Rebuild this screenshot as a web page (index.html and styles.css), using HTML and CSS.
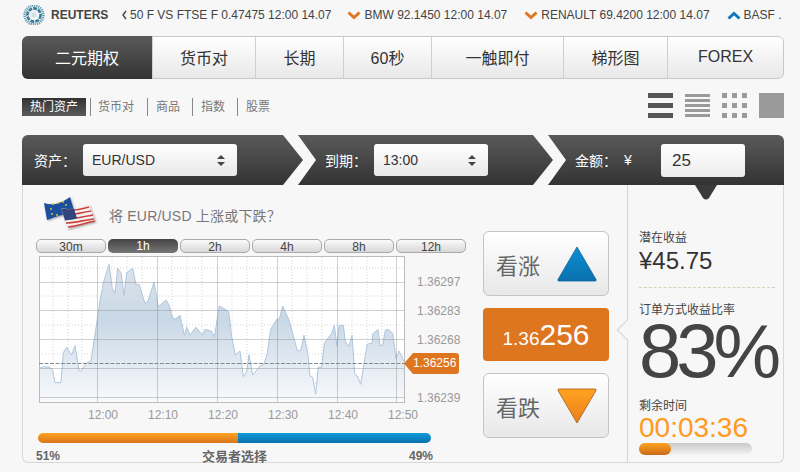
FILE: index.html
```html
<!DOCTYPE html>
<html lang="zh-CN">
<head>
  <meta charset="UTF-8" />
  <meta name="viewport" content="width=device-width, initial-scale=1" />
  <title>二元期权</title>
  <link rel="stylesheet" href="styles.css">
</head>
<body>
  <div class="page">
    <div class="ticker">
      <svg class="logo" width="22" height="22" viewBox="0 0 22 22">
        <circle cx="11" cy="11" r="9.4" fill="none" stroke="#6fa2b8" stroke-width="2.6" stroke-dasharray="1.3 .8"/>
        <circle cx="11" cy="11" r="6.6" fill="none" stroke="#3b7c9c" stroke-width="2.6" stroke-dasharray="4 1"/>
        <path d="M7 13c-1-4 3-7 7-5" fill="none" stroke="#e4edf1" stroke-width="1.6"/>
        <circle cx="11" cy="11" r="2.6" fill="#cfdfe6"/>
      </svg>
      <span class="brand">REUTERS</span>
      <div class="quotes">
        <span class="quote first"><svg class="chev" width="6" height="10" viewBox="0 0 6 10"><path d="M5 1 2 5l3 4" fill="none" stroke="#444" stroke-width="1.4"/></svg>50 F VS FTSE F 0.47475 12:00 14.07</span>
        <span class="quote"><svg class="chev" width="14" height="9" viewBox="0 0 14 9"><path d="M1.500 1.500 7 6.500l5.500-5" fill="none" stroke="#de751f" stroke-width="3"/></svg>BMW 92.1450 12:00 14.07</span>
        <span class="quote"><svg class="chev" width="14" height="9" viewBox="0 0 14 9"><path d="M1.500 1.500 7 6.500l5.500-5" fill="none" stroke="#de751f" stroke-width="3"/></svg>RENAULT 69.4200 12:00 14.07</span>
        <span class="quote"><svg class="chev" width="14" height="9" viewBox="0 0 14 9"><path d="M1.500 7.500 7 2.500l5.500 5" fill="none" stroke="#0f78b8" stroke-width="3"/></svg>BASF .</span>
      </div>
    </div>

    <nav class="tabs">
      <a class="tab active">二元期权</a>
      <a class="tab">货币对</a>
      <a class="tab">长期</a>
      <a class="tab">60秒</a>
      <a class="tab">一触即付</a>
      <a class="tab">梯形图</a>
      <a class="tab">FOREX</a>
    </nav>

    <div class="subbar">
      <div class="cats">
        <a class="cat active">热门资产</a>
        <a class="cat first">货币对</a>
        <a class="cat">商品</a>
        <a class="cat">指数</a>
        <a class="cat">股票</a>
      </div>
      <div class="views">
        <div class="view view-3"><i></i><i></i><i></i></div>
        <div class="view view-5"><i></i><i></i><i></i><i></i><i></i></div>
        <div class="view view-grid"><i></i><i></i><i></i><i></i><i></i><i></i><i></i><i></i><i></i></div>
        <div class="view view-one"></div>
      </div>
    </div>

    <div class="panel">
      <div class="head">
        <div class="step step-asset">
          <span class="step-label">资产：</span>
          <div class="picker picker-asset">EUR/USD
            <svg width="8" height="11" viewBox="0 0 8 11"><path d="M4 0 8 4H0zM4 11 0 7h8z" fill="#444"/></svg>
          </div>
        </div>
        <div class="step step-expiry">
          <span class="step-label">到期：</span>
          <div class="picker picker-expiry">13:00
            <svg width="8" height="11" viewBox="0 0 8 11"><path d="M4 0 8 4H0zM4 11 0 7h8z" fill="#444"/></svg>
          </div>
        </div>
        <div class="step">
          <span class="step-label">金额：</span>
          <span class="yen">¥</span>
          <div class="amount">25</div>
        </div>
        <svg class="arrow arrow-one" width="33" height="50" viewBox="0 0 33 50"><path d="M0 0h15l18 25-18 25H0l20-25z" fill="#f7f7f7"/></svg>
        <svg class="arrow arrow-two" width="33" height="50" viewBox="0 0 33 50"><path d="M0 0h15l18 25-18 25H0l20-25z" fill="#f7f7f7"/></svg>
      </div>

      <div class="body">
        <div class="main">
          <div class="question">
            <svg class="flag" width="54" height="34" viewBox="0 0 54 34">
              <path d="M2 7c8 3 16 1 26-6l5 17c-10-1-19 3-28 6z" fill="#1c4f9c"/>
              <g fill="#e8c93a"><circle cx="11" cy="8" r=".9"/><circle cx="16" cy="7" r=".9"/><circle cx="21" cy="6" r=".9"/><circle cx="9" cy="13" r=".9"/><circle cx="10" cy="18" r=".9"/><circle cx="15" cy="19" r=".9"/><circle cx="24" cy="9" r=".9"/></g>
              <path d="M19 12c11 3 19-1 28-3l6 16C43 27 35 30 26 33c-2-5-4-11-7-21z" fill="#f6f2f0"/>
              <g fill="none" stroke="#cc4040" stroke-width="1.700">
                <path d="M32 14c6 0 10-2 15-3"/>
                <path d="M33 18c6-1 10-2 16-3"/>
                <path d="M34 22c6-1 11-2 17-3"/>
                <path d="M24 27c10 0 18-3 28-4"/>
                <path d="M26 31c9-1 17-4 27-6"/>
              </g>
              <path d="M19 12c5 1.500 9 1.500 13 .5l3 10c-4 1-7 1.500-12 2z" fill="#34457e"/>
            </svg>
            <span class="ask">将 EUR/USD 上涨或下跌？</span>
          </div>

          <div class="trade">
            <div class="chart-col">
              <div class="ranges">
                <a class="range">30m</a>
                <a class="range active">1h</a>
                <a class="range">2h</a>
                <a class="range">4h</a>
                <a class="range">8h</a>
                <a class="range">12h</a>
              </div>
              <div class="chart-wrap">
                <svg class="chart" width="430" height="170" viewBox="36 254 430 170">
                  <defs>
                    <linearGradient id="area" x1="0" y1="0" x2="0" y2="1">
                      <stop offset="0" stop-color="#dde4eb"/>
                      <stop offset="0.4" stop-color="#c9d8e6"/>
                      <stop offset="1" stop-color="#f8fafc"/>
                    </linearGradient>
                  </defs>
                  <rect x="39.500" y="256.500" width="365" height="146" fill="#fff"/>
                  <path d="M39 268h366M39 296h366M39 325h366M39 354h366M39 383h366M53 257v145M68 257v145M82 257v145M112 257v145M127 257v145M142 257v145M172 257v145M187 257v145M202 257v145M232 257v145M247 257v145M262 257v145M292 257v145M307 257v145M322 257v145M352 257v145M367 257v145M382 257v145" stroke="#d6d6d6" stroke-dasharray="1 2" fill="none"/>
                  <path d="M39.3 368.3 43.3 366.7 50 367.3 52.7 370.7 55 382.7 61 382.7 63.3 352.7 66.7 347.3 71.7 355 75 345.7 79 370.7 80.7 371.3 86.7 362.7 91 361 96.7 323.3 99.3 305 103.3 283.3 109 264.3 112.3 288.3 115 293.3 117.7 268.3 121 272.7 124 295.7 126.7 272.7 132.7 268.3 136 285 139 284.3 145 303.3 147.7 301.7 154 282.3 158.3 306.7 166 300 169 305 172.7 317.7 175.3 319 180 315.3 184.3 335.3 186.7 327.3 190 335 196 327.3 202.3 335 205 329.3 211.7 331.3 214.3 337.3 219.3 306 223.3 308.3 228.7 311.7 231.7 336.7 235.3 355 240 351 243.3 376.7 246.7 371.7 249 355 252.7 375 260 366 264 364 267.3 353.3 270.7 329.3 276.7 319.3 279.3 319 282.7 306 289 320 297.3 350.7 300.7 350.7 304 335.3 307.7 353.3 310 376 312.7 377.3 315.7 394.3 318.3 367.3 321.7 367.3 324.3 343.3 331.7 333.3 334.3 325.3 337 346.7 339 325.3 343.3 325.3 345.3 341.7 349 346.7 352 335.3 354.7 374 357.3 376 360.7 384.3 367.3 344 372 343.3 372.7 334 378 329.3 380 346 382.7 345.3 385.3 330 388.3 329.3 392.7 333.3 396 358.7 399 351 403.3 360 404.3 361.7V402H39.3z" fill="url(#area)"/>
                  <path d="M39.3 368.3 43.3 366.7 50 367.3 52.7 370.7 55 382.7 61 382.7 63.3 352.7 66.7 347.3 71.7 355 75 345.7 79 370.7 80.7 371.3 86.7 362.7 91 361 96.7 323.3 99.3 305 103.3 283.3 109 264.3 112.3 288.3 115 293.3 117.7 268.3 121 272.7 124 295.7 126.7 272.7 132.7 268.3 136 285 139 284.3 145 303.3 147.7 301.7 154 282.3 158.3 306.7 166 300 169 305 172.7 317.7 175.3 319 180 315.3 184.3 335.3 186.7 327.3 190 335 196 327.3 202.3 335 205 329.3 211.7 331.3 214.3 337.3 219.3 306 223.3 308.3 228.7 311.7 231.7 336.7 235.3 355 240 351 243.3 376.7 246.7 371.7 249 355 252.7 375 260 366 264 364 267.3 353.3 270.7 329.3 276.7 319.3 279.3 319 282.7 306 289 320 297.3 350.7 300.7 350.7 304 335.3 307.7 353.3 310 376 312.7 377.3 315.7 394.3 318.3 367.3 321.7 367.3 324.3 343.3 331.7 333.3 334.3 325.3 337 346.7 339 325.3 343.3 325.3 345.3 341.7 349 346.7 352 335.3 354.7 374 357.3 376 360.7 384.3 367.3 344 372 343.3 372.7 334 378 329.3 380 346 382.7 345.3 385.3 330 388.3 329.3 392.7 333.3 396 358.7 399 351 403.3 360 404.3 361.7" fill="none" stroke="#aec6dc" stroke-width="1"/>
                  <path d="M39 282.500h366M39 310.500h366M39 339.500h366M39 368.500h366M39 397.500h366M97.500 257v145M157.500 257v145M217.500 257v145M277.500 257v145M337.500 257v145M396.500 257v145" stroke="#777" stroke-opacity=".35" fill="none"/>
                  <rect x="39.500" y="256.500" width="365" height="146" fill="none" stroke="#bbb"/>
                  <path d="M39 363.500h366" stroke="#888" stroke-dasharray="4 1.500" fill="none"/>
                  <g class="axis">
                    <text x="417" y="286">1.36297</text>
                    <text x="417" y="315">1.36283</text>
                    <text x="417" y="344">1.36268</text>
                    <text x="417" y="402">1.36239</text>
                    <text x="88" y="419">12:00</text>
                    <text x="148" y="419">12:10</text>
                    <text x="208" y="419">12:20</text>
                    <text x="268" y="419">12:30</text>
                    <text x="328" y="419">12:40</text>
                    <text x="388" y="419">12:50</text>
                  </g>
                </svg>
                <div class="tag">1.36256</div>
              </div>
              <div class="mood"><i class="mood-up"></i><i class="mood-down"></i></div>
              <div class="mood-labels"><span>51%</span><span>交易者选择</span><span>49%</span></div>
            </div>

            <div class="buy-col">
              <a class="buy">看涨
                <svg width="40" height="36" viewBox="0 0 40 36">
                  <defs><linearGradient id="blue" x1="0" y1="0" x2="0" y2="1"><stop offset="0" stop-color="#0d8fd2"/><stop offset="1" stop-color="#0a70ae"/></linearGradient></defs>
                  <path d="M20 1 39 33.500q.5 1.500-1 1.500H2q-1.500 0-1-1.500z" fill="url(#blue)" stroke="#0b6298" stroke-width=".8"/>
                </svg>
              </a>
              <div class="price"><span class="price-small">1.36</span>256</div>
              <a class="buy">看跌
                <svg width="40" height="36" viewBox="0 0 40 36">
                  <defs><linearGradient id="amber" x1="0" y1="0" x2="0" y2="1"><stop offset="0" stop-color="#ffa321"/><stop offset="1" stop-color="#ea7f1c"/></linearGradient></defs>
                  <path d="M20 35 1 2.500Q.5 1 2 1h36q1.500 0 1 1.500z" fill="url(#amber)" stroke="#9c5a1c" stroke-width=".8"/>
                </svg>
              </a>
            </div>
          </div>
        </div>

        <aside class="side">
          <svg class="notch" width="22" height="15" viewBox="0 0 22 15"><path d="M0 0h22l-8 13q-3 3-6 0z" fill="#3a3a3a"/></svg>
          <span class="pointer"></span>
          <div class="side-label">潜在收益</div>
          <div class="payout">¥45.75</div>
          <div class="side-label rate-label">订单方式收益比率</div>
          <div class="rate">83%</div>
          <div class="side-label left-label">剩余时间</div>
          <div class="clock">00:03:36</div>
          <div class="progress"><div class="progress-fill"></div></div>
        </aside>
      </div>
    </div>
  </div>
</body>
</html>
```

FILE: styles.css
```css
* {
  box-sizing: border-box;
}

html, body {
  height: 472px;
  overflow: hidden;
}

body {
  margin: 0;
  background-color: #f7f7f7;
  font-family: "Liberation Sans", "Noto Sans CJK SC", sans-serif;
  color: #333;
}

.page {
  width: 762px;
  margin-left: 22px;
  padding-top: 5px;
}

/* ticker */
.ticker {
  display: flex;
  align-items: center;
  height: 20px;
  width: 778px;
  overflow: hidden;
}

.logo {
  flex: none;
  margin-left: 1px;
}

.brand {
  flex: none;
  margin-left: 6px;
  width: 69px;
  font-size: 12px;
  font-weight: bold;
  color: #444;
}

.quotes {
  display: flex;
  gap: 17px;
  font-size: 12px;
  color: #444;
  white-space: nowrap;
}

.quote {
  display: flex;
  align-items: center;
  gap: 3px;
}

.quote.first {
  padding-left: 1px;
  margin-right: -1px;
}

/* main tabs */
.tabs {
  display: grid;
  grid-template-columns: 129px 103px 88px 88px 132px 104px 1fr;
  height: 43px;
  margin-top: 11px;
  border: 1px solid #c8c8c8;
  border-radius: 6px;
  background: linear-gradient(#ffffff, #e8e8e8);
}

.tab {
  display: flex;
  align-items: center;
  justify-content: center;
  padding-bottom: 2px;
  font-size: 16px;
  color: #333;
  border-left: 1px solid #cfcfcf;
}

.tab.active {
  margin: -1px 0 -1px -1px;
  border: none;
  border-radius: 6px 0 0 6px;
  background: linear-gradient(#5a5a5a, #333333);
  color: #fff;
}

/* sub bar */
.subbar {
  display: flex;
  justify-content: space-between;
  height: 25px;
  margin-top: 14px;
}

.cats {
  display: flex;
  align-items: center;
  height: 18px;
  margin-top: 5px;
}

.cat {
  padding: 0 12px 0 8px;
  height: 18px;
  line-height: 18px;
  font-size: 12px;
  color: #777;
  border-left: 1px solid #888;
}

.cat.active {
  width: 64px;
  padding: 0;
  margin-right: 4px;
  border: none;
  text-align: center;
  color: #fff;
  background: linear-gradient(#333333, #5a5a5a);
}

.cat.first {
  padding: 0 13px 0 7px;
}

.views {
  display: flex;
  gap: 12px;
}

.view {
  width: 25px;
  height: 25px;
}

.view i {
  display: block;
  background-color: #9a9a9a;
}

.view-3 {
  display: flex;
  flex-direction: column;
  justify-content: space-between;
}

.view-3 i {
  height: 5px;
  background-color: #555;
}

.view-5 {
  display: flex;
  flex-direction: column;
  justify-content: space-between;
  padding: 1px 0;
}

.view-5 i {
  height: 3px;
}

.view-grid {
  display: grid;
  grid-template-columns: repeat(3, 5px);
  grid-template-rows: repeat(3, 5px);
  justify-content: space-between;
  align-content: space-between;
}

.view-one {
  background-color: #9a9a9a;
}

/* trading panel */
.panel {
  height: 328px;
  margin-top: 17px;
  border: 1px solid #d8d8d8;
  border-top: none;
  border-radius: 6px;
}

.head {
  position: relative;
  display: flex;
  height: 50px;
  margin: 0 -1px;
  border-radius: 6px 6px 0 0;
  background: linear-gradient(#5a5a5a, #333333);
  color: #fff;
  font-size: 14px;
}

.step {
  display: flex;
  align-items: center;
  padding-left: 11px;
}

.step-asset {
  width: 292px;
  padding-left: 12px;
}

.step-expiry {
  width: 250px;
}

.step-label {
  width: 49px;
  flex: none;
  font-family: "Noto Sans CJK TC", sans-serif;
}

.picker {
  display: flex;
  align-items: center;
  justify-content: space-between;
  height: 32px;
  padding: 0 12px 0 9px;
  border-radius: 3px;
  background: linear-gradient(#ffffff, #e8e8e8);
  font-size: 14px;
  color: #333;
}

.picker-asset {
  width: 154px;
}

.picker-expiry {
  width: 114px;
}

.yen {
  width: 37px;
}

.amount {
  width: 84px;
  height: 33px;
  padding-left: 11px;
  line-height: 33px;
  border-radius: 3px;
  background: linear-gradient(#ffffff, #ececec);
  font-size: 17px;
  color: #333;
}

.arrow {
  position: absolute;
  top: 0;
}

.arrow-one {
  left: 261px;
}

.arrow-two {
  left: 511px;
}

.body {
  display: flex;
  height: 278px;
}

.main {
  width: 604px;
  padding-left: 13px;
}

.question {
  display: flex;
  align-items: center;
  height: 46px;
  padding-left: 6px;
}

.flag {
  flex: none;
  margin-top: 10px;
  filter: drop-shadow(1px 1px 1px rgba(0, 0, 0, 0.35));
}

.ask {
  margin-left: 13px;
  margin-top: 14px;
  font-size: 14px;
  letter-spacing: 0.2px;
  color: #777;
}

.trade {
  display: flex;
  gap: 17px;
}

.chart-col {
  width: 430px;
  padding-top: 8px;
}

.ranges {
  display: grid;
  grid-template-columns: repeat(6, 1fr);
  gap: 2px;
}

.range {
  height: 14px;
  line-height: 14px;
  text-align: center;
  font-size: 12px;
  color: #444;
  border: 1px solid #aaa;
  border-radius: 5px;
  background: linear-gradient(#fafafa, #d8d8d8);
}

.range.active {
  border: none;
  color: #fff;
  background: linear-gradient(#444, #777);
}

.chart-wrap {
  position: relative;
  height: 170px;
  margin-top: 1px;
}

.chart {
  display: block;
}

.axis text {
  font-size: 12px;
  fill: #999;
}

.tag {
  position: absolute;
  left: 368px;
  top: 99px;
  width: 55px;
  height: 21px;
  padding-left: 9px;
  line-height: 21px;
  font-size: 12px;
  color: #fff;
  background-color: #de751f;
  border-radius: 0 3px 3px 0;
  clip-path: polygon(0 50%, 9px 0, 100% 0, 100% 100%, 9px 100%);
}

.mood {
  display: flex;
  width: 393px;
  height: 10px;
  margin: 9px 0 0 2px;
  border-radius: 5px;
  overflow: hidden;
}

.mood-up {
  width: 200px;
  background: linear-gradient(#ffa321, #d9741c);
}

.mood-down {
  flex: 1;
  background: linear-gradient(#0f9ad8, #0a70ae);
}

.mood-labels {
  display: flex;
  justify-content: space-between;
  align-items: center;
  width: 397px;
  margin-top: 3px;
  font-size: 12px;
  font-weight: bold;
  color: #666;
}

.mood-labels span:nth-child(2) {
  font-size: 13px;
}

.buy-col {
  display: flex;
  flex-direction: column;
  gap: 12px;
  width: 126px;
}

.buy {
  display: flex;
  align-items: center;
  justify-content: space-between;
  height: 65px;
  padding: 0 11px 0 12px;
  border: 1px solid #c4c4c4;
  border-radius: 6px;
  background: linear-gradient(#ffffff, #e8e8e8);
  font-size: 22px;
  color: #666;
}

.price {
  height: 53px;
  line-height: 53px;
  text-align: center;
  border-radius: 4px;
  background-color: #de751f;
  color: #fff;
  font-size: 30px;
}

.price-small {
  font-size: 19px;
}

.side {
  position: relative;
  flex: 1;
  padding: 44px 0 0 11px;
  border-left: 1px solid #d4d4d4;
}

.notch {
  position: absolute;
  left: 67px;
  top: 0;
}

.pointer {
  position: absolute;
  left: -8px;
  top: 137px;
  width: 16px;
  height: 16px;
  transform: rotate(45deg);
  background-color: #f7f7f7;
  border-left: 1px solid #d4d4d4;
  border-bottom: 1px solid #d4d4d4;
}

.side-label {
  height: 18px;
  line-height: 18px;
  font-size: 12px;
  color: #444;
}

.payout {
  box-sizing: content-box;
  width: 136px;
  height: 30px;
  padding-bottom: 10px;
  border-bottom: 1px dashed #d5d0b8;
  line-height: 28px;
  font-size: 24px;
  color: #333;
}

.rate-label {
  margin-top: 13px;
}

.rate {
  height: 68px;
  line-height: 64px;
  font-size: 76px;
  letter-spacing: -5px;
  color: #444;
}

.left-label {
  margin-top: 10px;
}

.clock {
  height: 26px;
  line-height: 26px;
  font-size: 28px;
  color: #ff9a1e;
}

.progress {
  width: 113px;
  height: 12px;
  margin-top: 2px;
  border-radius: 6px;
  background: linear-gradient(#c8c8c8, #f4f4f4);
}

.progress-fill {
  width: 32px;
  height: 12px;
  border-radius: 6px;
  background: linear-gradient(#ffa321, #c96a18);
}
```
